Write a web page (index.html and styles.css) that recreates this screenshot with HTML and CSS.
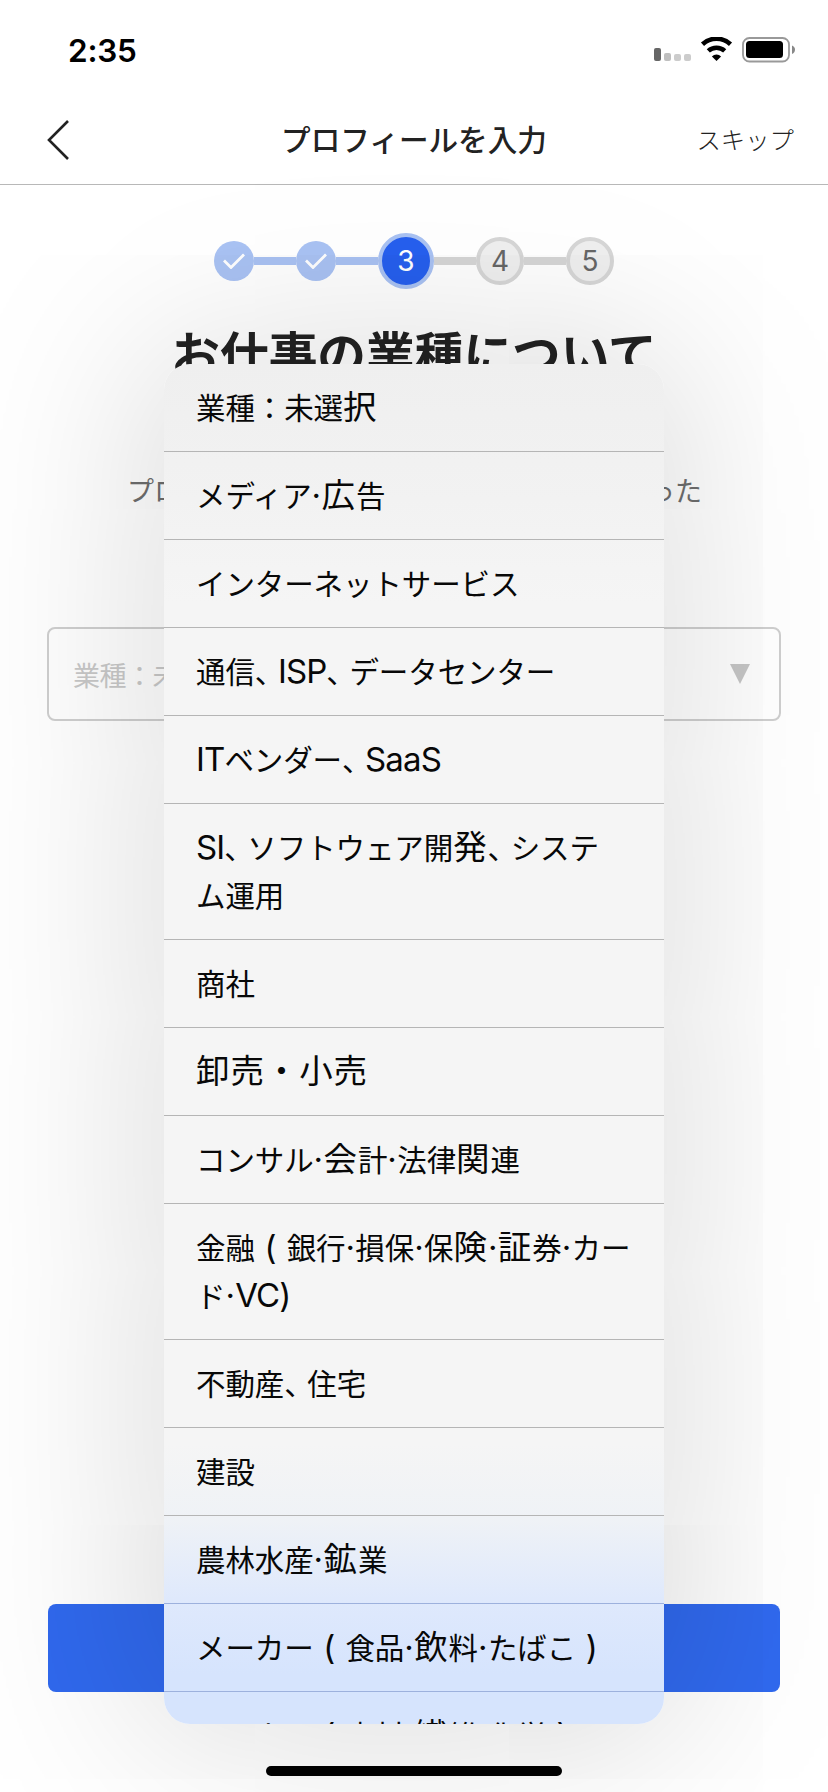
FILE: index.html
```html
<!DOCTYPE html>
<html lang="ja">
<head>
  <meta charset="UTF-8">
  <title>プロフィールを入力</title>
  <link rel="stylesheet" href="styles.css">
</head>
<body>
<div class="screen">

  <div class="status-bar">
    <span class="time">2:35</span>
    <svg class="status-icons" width="142" height="26" viewBox="0 0 142 26">
      <rect x="0" y="11" width="7" height="13" rx="2" fill="#666"/>
      <rect x="10" y="16" width="7" height="8" rx="2" fill="#bfbfbf"/>
      <rect x="20" y="17" width="7" height="7" rx="2" fill="#ccc"/>
      <rect x="30" y="17" width="7" height="7" rx="2" fill="#ccc"/>
      <path d="M48.5 7.2a20.6 20.6 0 0 1 28 0" fill="none" stroke="#000" stroke-width="4.6"/>
      <path d="M54.3 13.9a12.2 12.2 0 0 1 16.4 0" fill="none" stroke="#000" stroke-width="4.6"/>
      <path d="M62.5 24l-4.6-4.6a6.6 6.6 0 0 1 9.2 0z"/>
      <rect x="89" y="1" width="46" height="23.5" rx="6.5" fill="none" stroke="#999" stroke-width="1.8"/>
      <rect x="92" y="4" width="37" height="17" rx="3.5"/>
      <path d="M138 8.6c2 .7 3 2.3 3 4.2s-1 3.5-3 4.2z" fill="#888"/>
    </svg>
  </div>

  <header class="nav">
    <svg class="back" width="24" height="42" viewBox="0 0 24 42">
      <path d="M21 2L2 21l19 19" fill="none" stroke="#222" stroke-width="2.6"/>
    </svg>
    <h1 class="nav-title">プロフィールを入力</h1>
    <a class="skip">スキップ</a>
  </header>

  <main class="content">
    <div class="steps">
      <span class="step done"><svg width="22" height="16" viewBox="0 0 22 16"><path d="M1 7.5l7 7L21 1.5"/></svg></span>
      <span class="line line-done"></span>
      <span class="step done"><svg width="22" height="16" viewBox="0 0 22 16"><path d="M1 7.5l7 7L21 1.5"/></svg></span>
      <span class="line line-done"></span>
      <span class="step current">3</span>
      <span class="line"></span>
      <span class="step">4</span>
      <span class="line"></span>
      <span class="step">5</span>
    </div>

    <h2 class="title">お仕事の業種について</h2>
    <p class="lead"><span>プロ</span><span>った</span></p>

    <div class="select">
      <span>業種：未</span>
      <svg width="20" height="20" viewBox="0 0 20 20"><path d="M0 0h20L10 20z" fill="#c6c6c6"/></svg>
    </div>
  </main>

  <div class="submit"></div>
  <div class="home-bar"></div>

  <ul class="menu">
    <li>業種：未選<b>択</b></li>
    <li>メディア<em>·</em><b>広</b>告</li>
    <li>インターネットサービス</li>
    <li>通信<u>、</u><i>ISP</i><u>、</u>データセンター</li>
    <li><i>IT</i>ベンダー<u>、</u><i>SaaS</i></li>
    <li><i>SI</i><u>、</u>ソフトウェア開<b>発</b><u>、</u>システ<br>ム運用</li>
    <li>商社</li>
    <li><b>卸売・小売</b></li>
    <li>コンサル<em>·</em><b>会</b>計<em>·</em>法律<b>関</b>連</li>
    <li>金融<em> ( </em>銀行<em>·</em>損保<em>·</em>保<b>険</b><em>·</em><b>証</b>券<em>·</em>カー<br>ド<em>·</em><i>VC)</i></li>
    <li>不動産<u>、</u>住宅</li>
    <li>建設</li>
    <li>農林水産<em>·</em><b>鉱</b>業</li>
    <li class="tinted">メーカー<em> ( </em>食品<em>·</em><b>飲</b>料<em>·</em>たばこ<em> )</em></li>
    <li class="tinted">メーカー<em> ( </em>素材<em>·</em><b>繊</b>維<em>·</em>化学<em> )</em></li>
  </ul>

</div>
</body>
</html>
```
FILE: styles.css
```css
* {
  box-sizing: border-box;
}

body {
  margin: 0;
  background: #fff;
  color: #222;
  font-family: Inter, "Noto Sans CJK JP", sans-serif;
}

.screen {
  position: relative;
  display: flex;
  flex-direction: column;
  width: 828px;
  height: 1792px;
  overflow: hidden;
}

/* status bar */
.status-bar {
  display: flex;
  justify-content: space-between;
  height: 96px;
  padding: 37px 32px 0 68px;
}

.time {
  color: #000;
  font-size: 31.5px;
  font-weight: 600;
  line-height: 28px;
  letter-spacing: -0.2px;
}

/* navigation */
.nav {
  display: grid;
  grid-template-columns: 140px 1fr 140px;
  align-items: center;
  height: 89px;
  padding: 0 34px 0 47px;
  border-bottom: 1px solid #b8b8b8;
}

.nav-title {
  margin: 0 0 0 -13px;
  font-size: 29.6px;
  font-weight: 500;
  line-height: 40px;
  text-align: center;
}

.skip {
  font-size: 24.4px;
  font-weight: 300;
  line-height: 40px;
  text-align: right;
}

/* steps */
.steps {
  display: flex;
  align-items: center;
  justify-content: center;
  height: 56px;
  margin-top: 48px;
}

.step {
  display: flex;
  align-items: center;
  justify-content: center;
  width: 48px;
  height: 48px;
  border: 4px solid #d6d6d6;
  border-radius: 50%;
  background: #efefef;
  color: #666;
  font-size: 28px;
}

.done {
  width: 40px;
  height: 40px;
  border: 0;
  background: #a9c2f3;
}

.done path {
  fill: none;
  stroke: #fff;
  stroke-width: 2.8;
}

.current {
  width: 56px;
  height: 56px;
  border-color: #a9c2f3;
  background: #265fee;
  color: #fff;
}

.line {
  width: 42px;
  height: 8px;
  background: #d6d6d6;
}

.line-done {
  background: #a9c2f3;
}

/* form */
.title {
  margin: 37px 0 0;
  font-size: 48.7px;
  font-weight: 700;
  line-height: 60px;
  text-align: center;
  white-space: nowrap;
}

.lead {
  display: flex;
  justify-content: space-between;
  margin: 86px 126px 0 127px;
  color: #6e6e6e;
  font-size: 27px;
  line-height: 40px;
}

.select {
  display: flex;
  align-items: center;
  justify-content: space-between;
  height: 94px;
  margin: 115px 47px 0;
  padding: 0 29px 0 24px;
  border: 2px solid #cfcfcf;
  border-radius: 8px;
  color: #c9c9c9;
  font-size: 27px;
  letter-spacing: -0.5px;
}

.submit {
  height: 88px;
  margin: auto 48px 0;
  border-radius: 8px;
  background: #3069ee;
}

.home-bar {
  z-index: 2;
  width: 296px;
  height: 10px;
  margin: 74px auto 16px;
  border-radius: 5px;
  background: #000;
}

/* dropdown menu over the form */
.menu {
  position: absolute;
  top: 364px;
  left: 164px;
  width: 500px;
  height: 1360px;
  margin: 0;
  padding: 0;
  overflow: hidden;
  border-radius: 26px;
  background: linear-gradient(#efefef 0, #f1f1f1 100px, #f5f5f5 240px, #f5f5f5 1080px, #eff2f6 1155px, #dfe9fc 1235px, #d6e4fd 1310px);
  box-shadow: 0 0 200px 10px rgba(0, 0, 0, 0.17);
  color: #080808;
  list-style: none;
}

.menu li {
  min-height: 88px;
  padding: 20px 20px 19px 32px;
  border-bottom: 1px solid #b5b5b5;
  font-size: 29.5px;
  line-height: 48px;
  letter-spacing: -0.1px;
  white-space: nowrap;
}

.menu li:nth-child(13),
.menu .tinted {
  border-color: #9db1dd;
}

/* latin letters */
.menu i {
  font-size: 33px;
  font-style: normal;
  line-height: 1;
  letter-spacing: -0.9px;
}

/* middle dots and brackets */
.menu em {
  font-size: 33px;
  font-style: normal;
  line-height: 1;
  letter-spacing: 0.4px;
  white-space: pre;
}

/* wider glyphs */
.menu b {
  font-size: 33.5px;
  font-weight: 400;
  line-height: 1;
  letter-spacing: 0.9px;
}

/* narrow comma */
.menu u {
  letter-spacing: -6.4px;
  text-decoration: none;
}
```
